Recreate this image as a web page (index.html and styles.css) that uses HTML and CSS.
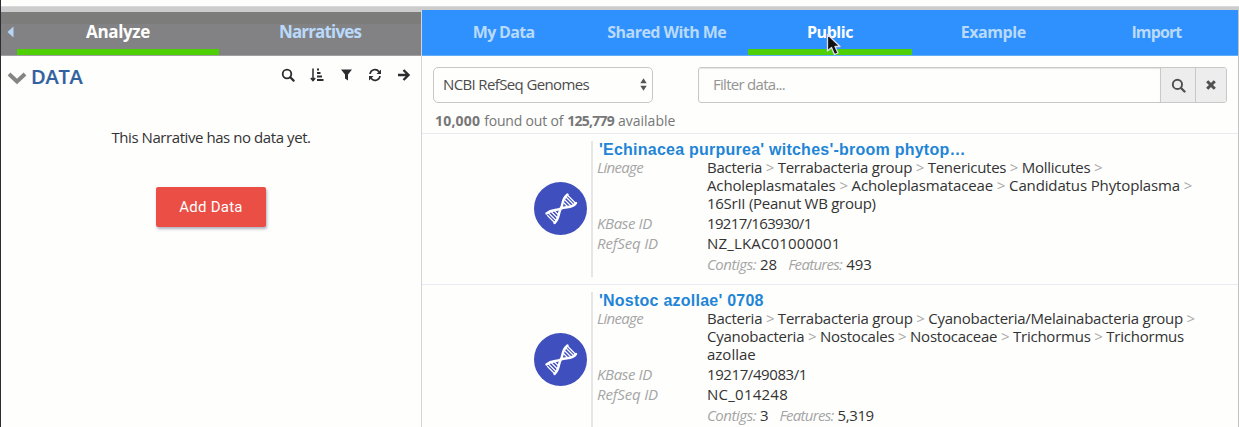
FILE: index.html
```
<!DOCTYPE html>
<html lang="en">
<head>
<meta charset="utf-8">
<title>Narrative data</title>
<link rel="stylesheet" href="styles.css">
</head>
<body>
<svg class="defs" width="0" height="0">
  <symbol id="search" viewBox="0 0 14 14"><circle cx="6" cy="6" r="4.300" fill="none" stroke="currentColor" stroke-width="1.800"/><path d="M9.300 9.300l3.300 3.300" stroke="currentColor" stroke-width="2.200" stroke-linecap="round"/></symbol>
  <symbol id="dna" viewBox="0 0 53 53">
    <circle cx="26.5" cy="26.5" r="26.5" fill="#3f4fbd"/>
    <g fill="none" stroke="#fff" stroke-linecap="round">
      <path d="M12.500 31.500C18 27 22 29 27 26.500S38 27 42 21" stroke-width="2.400"/>
      <path d="M20.500 41C26 36 24 31 26.800 26.500S27 18 33.500 12.500" stroke-width="2.400"/>
      <path d="M32 15l8 8M30 17l7 7M29.500 20.500l4 4M33.800 13.500l7.500 7.500M14.500 31l7.500 7.500M17 29.500l6.500 6.500M20.500 29l3.500 3.500M13.500 33.500l6.500 6.500" stroke-width="1.200"/>
    </g>
  </symbol>
</svg>
<div class="topbar"></div>
<div class="app">
  <aside class="side">
    <nav class="side-tabs">
      <span class="collapse"><svg width="7" height="12" viewBox="0 0 7 12"><path d="M6.500 0.500V11.500L0.500 6z" fill="#b5d6f8"/></svg></span>
      <a class="tab active ls-a">Analyze</a>
      <a class="tab ls-b">Narratives</a>
    </nav>
    <div class="data-head">
      <svg class="chev" width="20" height="14" viewBox="0 0 20 14"><path d="M2 3l8 7.500L18 3" fill="none" stroke="#858585" stroke-width="4"/></svg>
      <h1>DATA</h1>
      <div class="tools">
        <svg width="14" height="14"><use href="#search"/></svg>
        <svg width="14" height="14" viewBox="0 0 14 14"><path d="M3 0.500V12M0.800 10L3 12.500L5.200 10" fill="none" stroke="currentColor" stroke-width="1.500"/><path d="M7 1.500h2M7 5h3.500M7 8.500h5M7 12h6.500" stroke="currentColor" stroke-width="1.800"/></svg>
        <svg width="14" height="14" viewBox="0 0 14 14"><path d="M2 1.500h11L9 6.500V12.500L6 10.500V6.500z" fill="currentColor"/></svg>
        <svg width="14" height="14" viewBox="0 0 14 14"><path d="M2 6A5 5 0 0 1 11 3.700M12 8A5 5 0 0 1 3 10.300" fill="none" stroke="currentColor" stroke-width="1.700"/><path d="M13 1.500v4.500H8.500zM1 12.500V8h4.500z" fill="currentColor"/></svg>
        <svg width="14" height="14" viewBox="0 0 14 14"><path d="M1 7h10M6.500 2L11.500 7L6.500 12" fill="none" stroke="currentColor" stroke-width="2.400"/></svg>
      </div>
    </div>
    <p class="empty">This Narrative has no data yet.</p>
    <button class="add">Add Data</button>
  </aside>
  <main class="browser">
    <nav class="tabs">
      <a class="tab ls-c">My Data</a>
      <a class="tab ls-d">Shared With Me</a>
      <a class="tab active ls-e">Public</a>
      <a class="tab ls-e">Example</a>
      <a class="tab ls-f">Import</a>
    </nav>
    <div class="filters">
      <div class="select"><span>NCBI RefSeq Genomes</span><svg width="7" height="13" viewBox="0 0 7 13"><path d="M0.300 5.300L3.500 0.300L6.700 5.300zM0.300 7.700L3.500 12.700L6.700 7.700z" fill="#555"/></svg></div>
      <div class="search">
        <span class="placeholder">Filter data...</span>
        <span class="btn find"><svg width="15" height="15" viewBox="0 0 14 14"><use href="#search"/></svg></span>
        <span class="btn clear"><svg width="12" height="12" viewBox="0 0 12 12"><path d="M2.200 2.200l7.600 7.600M9.800 2.200l-7.600 7.600" stroke="currentColor" stroke-width="3"/></svg></span>
      </div>
    </div>
    <p class="count"><b class="n1">10,000</b> <span class="w1">found out of</span> <b class="n2">125,779</b> <span>available</span></p>
    <section class="row">
      <div class="icon"><svg width="53" height="53"><use href="#dna"/></svg></div>
      <div class="info">
        <h2>'Echinacea purpurea' witches'-broom phytop…</h2>
        <dl>
          <dt class="lin">Lineage</dt>
          <dd class="lineage"><div class="l27">Bacteria <i>&gt;</i> Terrabacteria group <i>&gt;</i> Tenericutes <i>&gt;</i> Mollicutes <i>&gt;</i></div><div class="l13">Acholeplasmatales <i>&gt;</i> Acholeplasmataceae <i>&gt;</i> Candidatus Phytoplasma <i>&gt;</i></div><div class="l27">16SrII (Peanut WB group)</div></dd>
          <dt class="kb">KBase ID</dt><dd class="l67">19217/163930/1</dd>
          <dt class="rs">RefSeq ID</dt><dd class="p17">NZ_LKAC01000001</dd>
          <dt></dt><dd class="stats"><em class="cg">Contigs:</em><span>28</span><em class="ft">Features:</em><span>493</span></dd>
        </dl>
      </div>
    </section>
    <section class="row">
      <div class="icon"><svg width="53" height="53"><use href="#dna"/></svg></div>
      <div class="info">
        <h2>'Nostoc azollae' 0708</h2>
        <dl>
          <dt class="lin">Lineage</dt>
          <dd class="lineage"><div class="l25">Bacteria <i>&gt;</i> Terrabacteria group <i>&gt;</i> Cyanobacteria/Melainabacteria group <i>&gt;</i></div><div class="l23">Cyanobacteria <i>&gt;</i> Nostocales <i>&gt;</i> Nostocaceae <i>&gt;</i> Trichormus <i>&gt;</i> Trichormus</div><div>azollae</div></dd>
          <dt class="kb">KBase ID</dt><dd class="l41">19217/49083/1</dd>
          <dt class="rs">RefSeq ID</dt><dd class="p25">NC_014248</dd>
          <dt></dt><dd class="stats"><em class="cg">Contigs:</em><span>3</span><em class="ft">Features:</em><span class="l41">5,319</span></dd>
        </dl>
      </div>
    </section>
  </main>
</div>
<svg class="cursor" width="16" height="24" viewBox="0 0 16 24"><path d="M1.500 1.500V18L5.500 14.500L8.500 21.500L12 20L9 13.500H14z" fill="#111" stroke="#dde" stroke-width="1.300" stroke-linejoin="round"/></svg>
</body>
</html>
```
FILE: styles.css
```
* { box-sizing: border-box; }
body {
  margin: 0; height: 427px; overflow: hidden; background: #fefefd; color: #333;
  font: 15px/18px "Open Sans", "Noto Sans", sans-serif;
}
h1, h2, p, dl, dd { margin: 0; }
svg { display: block; flex: none; }
.defs { position: absolute; }
.topbar { height: 10px; border-left: 1px solid #2b2c33; background: linear-gradient(#fefefd 6px, #dadada 6px, #dadada 7px, #cbcccb 7px); }
.app { display: flex; height: 417px; }

.side { width: 422px; border-left: 1px solid #2b2c33; border-right: 1px solid #d3d5da; }
.side-tabs {
  display: flex; height: 46px; border-top: 2px solid #cbcccb; border-bottom: 1px solid #a0a0a0;
  background: linear-gradient(#7c7c7a 12px, #828284 12px);
}
.collapse { width: 16px; padding: 14px 0 0 6px; }
.tab {
  flex: 1; display: flex; justify-content: center; padding-top: 10px;
  font-weight: bold; font-size: 16px; line-height: 24px; color: #b9dafb;
}
.side-tabs .tab { padding-top: 8px; font-size: 17px; }
.tab.active { color: #fff; border-bottom: 6px solid #4fd006; }
.data-head { display: flex; align-items: center; height: 41px; padding: 0 10px 0 6px; }
.chev { margin-top: 3px; }
h1 { margin-left: 4px; font-size: 20px; line-height: 24px; color: #31629f; letter-spacing: -.2px; font-weight: 600; -webkit-text-stroke: .2px; }
.tools { display: flex; gap: 15px; margin: -4px 0 0 auto; color: #2c2c30; }
.empty { margin-top: 31px; text-align: center; letter-spacing: -.43px; }
.add {
  display: block; margin: 41px 0 0 155px; width: 110px; height: 40px; padding: 0; border: 0; border-radius: 2px;
  background: #ea4e44; color: #fff; font: 15px/41px Roboto, sans-serif; letter-spacing: .25px;
  box-shadow: 1px 2px 3px rgba(60, 60, 100, .4);
}

.browser { width: 817px; border-right: 1px solid #c4c4c4; }
.tabs { display: flex; height: 46px; background: #2f91fd; border-bottom: 1px solid #62acfa; }
.filters { display: flex; justify-content: space-between; padding: 11px 11px 0 11px; }
.select {
  display: flex; align-items: center; justify-content: space-between; width: 220px; height: 36px;
  padding: 0 5px 2px 9px; border: 1px solid #c8c8c8; border-radius: 5px; color: #4c4c4c; letter-spacing: -.63px;
}
.search { display: flex; width: 529px; height: 36px; border: 1px solid #c8c8c8; border-radius: 3px; overflow: hidden; }
.placeholder { flex: 1; padding: 7px 14px; color: #949494; letter-spacing: -.72px; box-shadow: inset 0 1px 1px #e4e4e4; }
.btn { display: flex; align-items: center; justify-content: center; background: #ededed; color: #505050; border-left: 1px solid #c8c8c8; }
.find { width: 35px; }
.clear { width: 31px; }
.count { height: 30px; padding: 9px 0 0 13px; font-size: 14px; color: #777; display: flex; gap: 4px; }
.n1 { letter-spacing: .2px; }
.w1 { letter-spacing: -.19px; }
.n2 { letter-spacing: -.75px; }

.row { display: flex; height: 151px; border-top: 1px solid #e9ebf3; padding: 7px 0; }
.icon { width: 171px; padding: 41px 0 0 112px; border-right: 2px solid #e6e6e6; }
.info { padding-left: 4px; }
h2 { margin-left: 2px; height: 17px; font: bold 16px/18px "Liberation Sans", sans-serif; color: #1f85d6; letter-spacing: .24px; }
dl { display: grid; grid-template-columns: 110px 500px; line-height: 20.300px; }
.lineage { line-height: 18px; padding-bottom: 1px; white-space: nowrap; }
dt.lin { line-height: 18px; }
dt, em { color: #a5a5a5; font-style: italic; }
i { font-style: normal; color: #aaa; }
.stats { display: flex; }
.stats span { margin: 0 11px 0 4px; }
.lin { letter-spacing: -.69px; }
.kb { letter-spacing: -.35px; }
.rs { letter-spacing: -.16px; }
.cg { letter-spacing: -.46px; }
.ft { letter-spacing: -.7px; }
.l27 { letter-spacing: -.27px; }
.l25 { letter-spacing: -.25px; }
.l23 { letter-spacing: -.23px; }
.l13 { letter-spacing: -.13px; }
.l67 { letter-spacing: -.67px; }
.l41 { letter-spacing: -.41px; }
.p17 { letter-spacing: .17px; }
.p25 { letter-spacing: .25px; }
.ls-a { letter-spacing: -.34px; }
.ls-b { letter-spacing: -.85px; }
.ls-c { letter-spacing: -.71px; }
.ls-d { letter-spacing: -.54px; }
.ls-e { letter-spacing: -.44px; }
.ls-f { letter-spacing: -.88px; }
.cursor { position: absolute; left: 826px; top: 33px; }
```
